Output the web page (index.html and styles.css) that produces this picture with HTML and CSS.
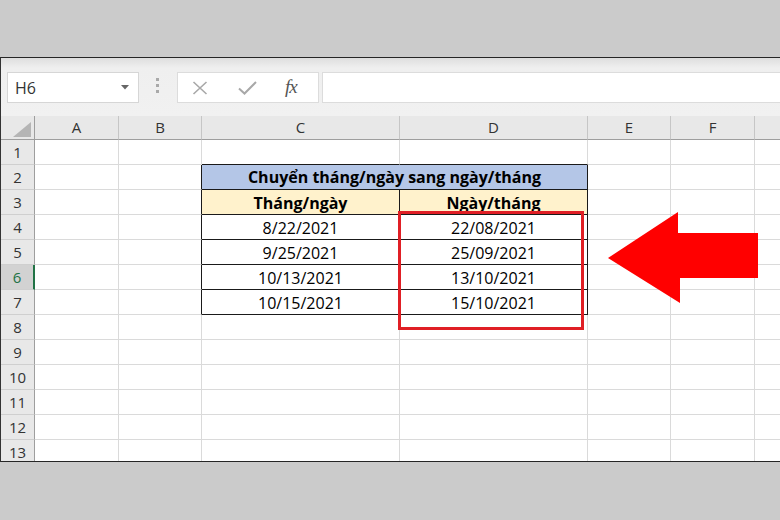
FILE: index.html
```html
<!DOCTYPE html>
<html lang="vi">
<head>
<meta charset="utf-8">
<title>Excel</title>
<link rel="stylesheet" href="styles.css">
</head>
<body>
<div class="top"></div>
<div class="window">
  <div class="formula">
    <div class="namebox"><span>H6</span><svg class="dd" width="8" height="5" viewBox="0 0 8 5"><polygon points="0,0 8,0 4,4.5" fill="#666"/></svg></div>
    <div class="dots"><i></i><i></i><i></i></div>
    <div class="fxbox">
      <svg class="ico" width="16" height="14" viewBox="0 0 16 14"><path d="M1.5 1 L14.5 13 M14.5 1 L1.5 13" stroke="#a8a8a8" stroke-width="1.6" fill="none"/></svg>
      <svg class="ico" width="19" height="14" viewBox="0 0 19 14"><path d="M1 7.5 L6.5 12.5 L18 1" stroke="#a8a8a8" stroke-width="2" fill="none"/></svg>
      <span class="fx">fx</span>
    </div>
    <div class="input"></div>
  </div>
  <div class="sheet">
    <table class="grid">
      <colgroup>
        <col class="c-rh"><col class="c-a"><col class="c-b"><col class="c-c"><col class="c-d"><col class="c-e"><col class="c-f"><col class="c-g">
      </colgroup>
      <thead>
        <tr>
          <th class="corner"><svg width="18" height="15" viewBox="0 0 18 15"><polygon points="18,0 18,15 0,15" fill="#b5b5b5"/></svg></th>
          <th>A</th><th>B</th><th>C</th><th>D</th><th>E</th><th>F</th><th></th>
        </tr>
      </thead>
      <tbody>
        <tr><td class="rh">1</td><td></td><td></td><td class="eb"></td><td class="eb"></td><td></td><td></td><td></td></tr>
        <tr><td class="rh">2</td><td></td><td class="er"></td><td class="tb title" colspan="2">Chuyển tháng/ngày sang ngày/tháng</td><td></td><td></td><td></td></tr>
        <tr><td class="rh">3</td><td></td><td class="er"></td><td class="tb sub">Tháng/ngày</td><td class="tb sub">Ngày/tháng</td><td></td><td></td><td></td></tr>
        <tr><td class="rh">4</td><td></td><td class="er"></td><td class="tb">8/22/2021</td><td class="tb">22/08/2021</td><td></td><td></td><td></td></tr>
        <tr><td class="rh">5</td><td></td><td class="er"></td><td class="tb">9/25/2021</td><td class="tb">25/09/2021</td><td></td><td></td><td></td></tr>
        <tr><td class="rh active">6</td><td></td><td class="er"></td><td class="tb">10/13/2021</td><td class="tb">13/10/2021</td><td></td><td></td><td></td></tr>
        <tr><td class="rh">7</td><td></td><td class="er"></td><td class="tb">10/15/2021</td><td class="tb">15/10/2021</td><td></td><td></td><td></td></tr>
        <tr><td class="rh">8</td><td></td><td></td><td></td><td></td><td></td><td></td><td></td></tr>
        <tr><td class="rh">9</td><td></td><td></td><td></td><td></td><td></td><td></td><td></td></tr>
        <tr><td class="rh">10</td><td></td><td></td><td></td><td></td><td></td><td></td><td></td></tr>
        <tr><td class="rh">11</td><td></td><td></td><td></td><td></td><td></td><td></td><td></td></tr>
        <tr><td class="rh">12</td><td></td><td></td><td></td><td></td><td></td><td></td><td></td></tr>
        <tr><td class="rh">13</td><td></td><td></td><td></td><td></td><td></td><td></td><td></td></tr>
      </tbody>
    </table>
  </div>
  <div class="highlight"></div>
  <svg class="arrow" width="165" height="105" viewBox="0 0 165 105"><polygon points="8,53 78,7 78,28 158,28 158,73 80,73 80,98" fill="#ff0000"/></svg>
</div>
</body>
</html>
```

FILE: styles.css
```css
* { box-sizing: border-box; }

body {
  margin: 0;
  background: #cbcbcb;
  font-family: "Open Sans", "Noto Sans", sans-serif;
  color: #000;
}

.top { height: 57px; }

.window {
  position: relative;
  background: #fff;
  border-top: 1px solid #262626;
  border-left: 1px solid #333;
  border-bottom: 1px solid #262626;
}

.formula {
  height: 58px;
  display: flex;
  align-items: flex-start;
  padding: 14px 0 0 6px;
  background: linear-gradient(#dedede, #efefef 10px, #f1f1f1);
}

.namebox {
  width: 132px;
  height: 31px;
  background: #fff;
  border: 1px solid #d6d6d6;
  display: flex;
  align-items: center;
  justify-content: space-between;
  padding: 0 9px 0 7px;
  font-size: 16px;
  color: #333;
}

.dots {
  width: 4px;
  margin: 6px 17px 0 17px;
  display: flex;
  flex-direction: column;
  gap: 3px;
}
.dots i {
  display: block;
  width: 3px;
  height: 3px;
  background: #a9a9a9;
}

.fxbox {
  width: 142px;
  height: 31px;
  background: #fff;
  border: 1px solid #dcdcdc;
  display: flex;
  align-items: center;
  padding: 0 0 0 14px;
}
.fxbox .ico { margin-right: 30px; }
.fxbox .ico + .ico { margin-right: 28px; }
.fx {
  font-family: "Liberation Serif", "DejaVu Serif", serif;
  font-style: italic;
  font-size: 19px;
  color: #555;
  letter-spacing: -1px;
  margin-top: -2px;
}

.input {
  flex: 1;
  height: 31px;
  margin-left: 3px;
  background: #fff;
  border: 1px solid #dcdcdc;
  border-right: none;
}

.sheet {
  height: 345px;
  overflow: hidden;
}

.grid {
  border-collapse: separate;
  border-spacing: 0;
  table-layout: fixed;
  width: 860px;
}

.c-rh { width: 34px; }
.c-a { width: 84px; }
.c-b { width: 83px; }
.c-c { width: 198px; }
.c-d { width: 188px; }
.c-e { width: 83px; }
.c-f { width: 84px; }
.c-g { width: 106px; }

.grid td,
.grid th {
  padding: 0;
  height: 25px;
  border-right: 1px solid #dadada;
  border-bottom: 1px solid #dadada;
  text-align: center;
  white-space: nowrap;
  overflow: hidden;
  font-size: 16px;
  line-height: 21px;
  vertical-align: bottom;
}

.grid th {
  height: 24px;
  background: #e8e8e8;
  border-right-color: #c6c6c6;
  border-bottom-color: #9e9e9e;
  font-weight: normal;
  font-size: 15px;
  color: #333;
  vertical-align: middle;
}

.grid th.corner {
  border-right-color: #9e9e9e;
  text-align: right;
  padding: 3px 3px 0 0;
}
.corner svg { display: block; margin-left: auto; }

.grid td.rh {
  background: #e8e8e8;
  border-right-color: #9e9e9e;
  border-bottom-color: #cfcfcf;
  font-size: 15px;
  color: #333;
  vertical-align: middle;
}

.grid td.rh.active {
  background: #d2d2d2;
  color: #217346;
  border-right: 2px solid #217346;
}

.grid td.er { border-right-color: #1a1a1a; }
.grid td.eb { border-bottom-color: #1a1a1a; }
.grid td.tb {
  border-right-color: #1a1a1a;
  border-bottom-color: #1a1a1a;
}

.grid td.title {
  background: #b4c6e7;
  font-weight: 700;
  padding-bottom: 1px;
}
.grid td.sub {
  background: #fff2cc;
  font-weight: 700;
}

.highlight {
  position: absolute;
  left: 397px;
  top: 153px;
  width: 186px;
  height: 119px;
  border: 3px solid #e01f25;
}

.arrow {
  position: absolute;
  left: 599px;
  top: 147px;
}
```
